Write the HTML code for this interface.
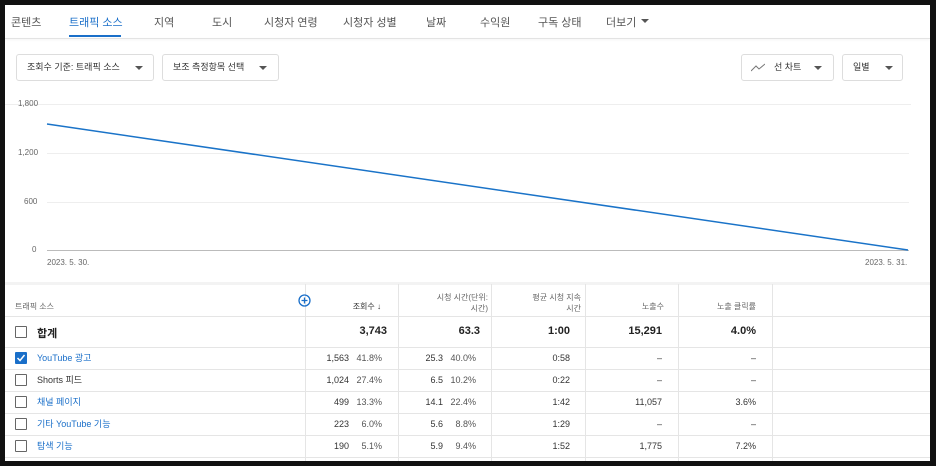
<!DOCTYPE html>
<html><head><meta charset="utf-8"><style>
*{box-sizing:border-box;margin:0;padding:0}
body{width:936px;height:466px;background:#111;position:relative;overflow:hidden;font-family:"Liberation Sans","Noto Sans CJK KR",sans-serif;color:#606060}
#p{position:absolute;left:5px;top:5px;width:925px;height:456px;background:#fff;overflow:hidden}
.tab{position:absolute;top:9px;font-size:11px;color:#555}
.sel{position:absolute;border:1px solid #ddd;border-radius:3px;height:27px;top:49px;font-size:9px;color:#333;line-height:25px;padding-left:10px}
.arr{position:absolute;width:0;height:0;border-left:4px solid transparent;border-right:4px solid transparent;border-top:4px solid #555;top:11px}
.ax{position:absolute;font-size:8px;color:#666}
.g{position:absolute;left:42px;width:862px;height:1px;background:#eee}
.t{position:absolute;font-size:9px;color:#333;text-align:right}
.h{position:absolute;font-size:8px;color:#666;text-align:right;line-height:11px}
.vl{position:absolute;top:279px;bottom:0;width:1px;background:#e5e5e5}
.hl{position:absolute;left:0;width:925px;height:1px;background:#e5e5e5}
.cb{position:absolute;left:10px;width:12px;height:12px;border:1.5px solid #666;border-radius:1px}
.lk{color:#1a6fc9}
.r{line-height:22px;top:342px}
</style></head><body><div id="p">
<div class="tab" style="left:6px">콘텐츠</div>
<div class="tab" style="left:64px;color:#1a6fc9">트래픽 소스</div>
<div style="position:absolute;left:64px;top:30px;width:52px;height:2px;background:#1a6fc9"></div>
<div class="tab" style="left:149px">지역</div>
<div class="tab" style="left:207px">도시</div>
<div class="tab" style="left:259px">시청자 연령</div>
<div class="tab" style="left:338px">시청자 성별</div>
<div class="tab" style="left:421px">날짜</div>
<div class="tab" style="left:475px">수익원</div>
<div class="tab" style="left:533px">구독 상태</div>
<div class="tab" style="left:601px">더보기</div>
<div class="arr" style="left:636px;top:14px"></div>
<div style="position:absolute;left:0;top:33px;width:925px;height:1px;background:#e3e3e3;box-shadow:0 1px 2px #eee"></div>
<div class="sel" style="left:11px;width:138px">조회수 기준: 트래픽 소스<div class="arr" style="left:118px"></div></div>
<div class="sel" style="left:157px;width:117px">보조 측정항목 선택<div class="arr" style="left:96px"></div></div>
<div class="sel" style="left:736px;width:93px;padding-left:32px"><svg style="position:absolute;left:9px;top:8px" width="14" height="9"><path d="M0 8 L5 3 L8 6 L14 1" stroke="#777" fill="none" stroke-width="1"/></svg>선 차트<div class="arr" style="left:72px"></div></div>
<div class="sel" style="left:837px;width:61px">일별<div class="arr" style="left:42px"></div></div>
<div class="g" style="top:99px;left:0;width:906px"></div>
<div class="g" style="top:148px"></div><div class="g" style="top:197px"></div>
<div class="g" style="top:245px;background:#bbb"></div>
<div class="ax" style="left:13px;top:94px">1,800</div>
<div class="ax" style="left:13px;top:143px">1,200</div>
<div class="ax" style="left:19px;top:192px">600</div>
<div class="ax" style="left:27px;top:240px">0</div>
<div class="ax" style="left:42px;top:253px">2023. 5. 30.</div>
<div class="ax" style="left:860px;top:253px">2023. 5. 31.</div>
<svg style="position:absolute;left:0;top:0" width="925" height="260"><line x1="42" y1="119" x2="903" y2="245" stroke="#1a73c8" stroke-width="1.5"/></svg>
<div style="position:absolute;left:0;top:277px;width:925px;height:3px;background:#f3f3f3"></div>
<div class="vl" style="left:300px"></div><div class="vl" style="left:393px"></div><div class="vl" style="left:486px"></div><div class="vl" style="left:580px"></div><div class="vl" style="left:673px"></div><div class="vl" style="left:767px"></div>
<div class="hl" style="top:311px"></div><div class="hl" style="top:342px"></div><div class="hl" style="top:364px"></div><div class="hl" style="top:386px"></div><div class="hl" style="top:408px"></div><div class="hl" style="top:430px"></div><div class="hl" style="top:452px"></div>
<div class="h" style="left:10px;top:296px;text-align:left">트래픽 소스</div>
<svg style="position:absolute;left:293px;top:289px" width="13" height="13"><circle cx="6.5" cy="6.5" r="5.5" stroke="#1a6fc9" fill="none" stroke-width="1.3"/><path d="M6.5 3.5v6M3.5 6.5h6" stroke="#1a6fc9" stroke-width="1.3"/></svg>
<div class="h" style="left:310px;width:66px;top:296px;color:#333">조회수 ↓</div>
<div class="h" style="left:395px;width:88px;top:287px">시청 시간(단위:<br>시간)</div>
<div class="h" style="left:488px;width:88px;top:287px">평균 시청 지속<br>시간</div>
<div class="h" style="left:582px;width:77px;top:296px">노출수</div>
<div class="h" style="left:675px;width:76px;top:296px">노출 클릭률</div>
<div class="cb" style="top:321px"></div>
<div style="position:absolute;left:32px;top:320px;font-size:11px;font-weight:bold;color:#222">합계</div>
<div class="t" style="left:300px;width:82px;top:320px;font-size:11px;font-weight:bold;color:#222">3,743</div>
<div class="t" style="left:393px;width:82px;top:320px;font-size:11px;font-weight:bold;color:#222">63.3</div>
<div class="t" style="left:486px;width:79px;top:320px;font-size:11px;font-weight:bold;color:#222">1:00</div>
<div class="t" style="left:580px;width:77px;top:320px;font-size:11px;font-weight:bold;color:#222">15,291</div>
<div class="t" style="left:673px;width:78px;top:320px;font-size:11px;font-weight:bold;color:#222">4.0%</div>
<div class="cb" style="top:347px;background:#1a6fc9;border-color:#1a6fc9"><svg width="10" height="10" style="position:absolute;left:0;top:0"><path d="M1.5 5 L4 7.5 L8.5 2" stroke="#fff" fill="none" stroke-width="1.5"/></svg></div>
<div class="cb" style="top:369px"></div><div class="cb" style="top:391px"></div><div class="cb" style="top:413px"></div><div class="cb" style="top:435px"></div>
<div class="t r" style="left:32px;text-align:left"><span class="lk">YouTube 광고</span><br>Shorts 피드<br><span class="lk">채널 페이지</span><br><span class="lk">기타 YouTube 기능</span><br><span class="lk">탐색 기능</span></div>
<div class="t r" style="left:300px;width:44px">1,563<br>1,024<br>499<br>223<br>190</div>
<div class="t r" style="left:340px;width:37px;color:#555">41.8%<br>27.4%<br>13.3%<br>6.0%<br>5.1%</div>
<div class="t r" style="left:393px;width:45px">25.3<br>6.5<br>14.1<br>5.6<br>5.9</div>
<div class="t r" style="left:435px;width:36px;color:#555">40.0%<br>10.2%<br>22.4%<br>8.8%<br>9.4%</div>
<div class="t r" style="left:486px;width:79px">0:58<br>0:22<br>1:42<br>1:29<br>1:52</div>
<div class="t r" style="left:580px;width:77px">–<br>–<br>11,057<br>–<br>1,775</div>
<div class="t r" style="left:673px;width:78px">–<br>–<br>3.6%<br>–<br>7.2%</div>
</div></body></html>
